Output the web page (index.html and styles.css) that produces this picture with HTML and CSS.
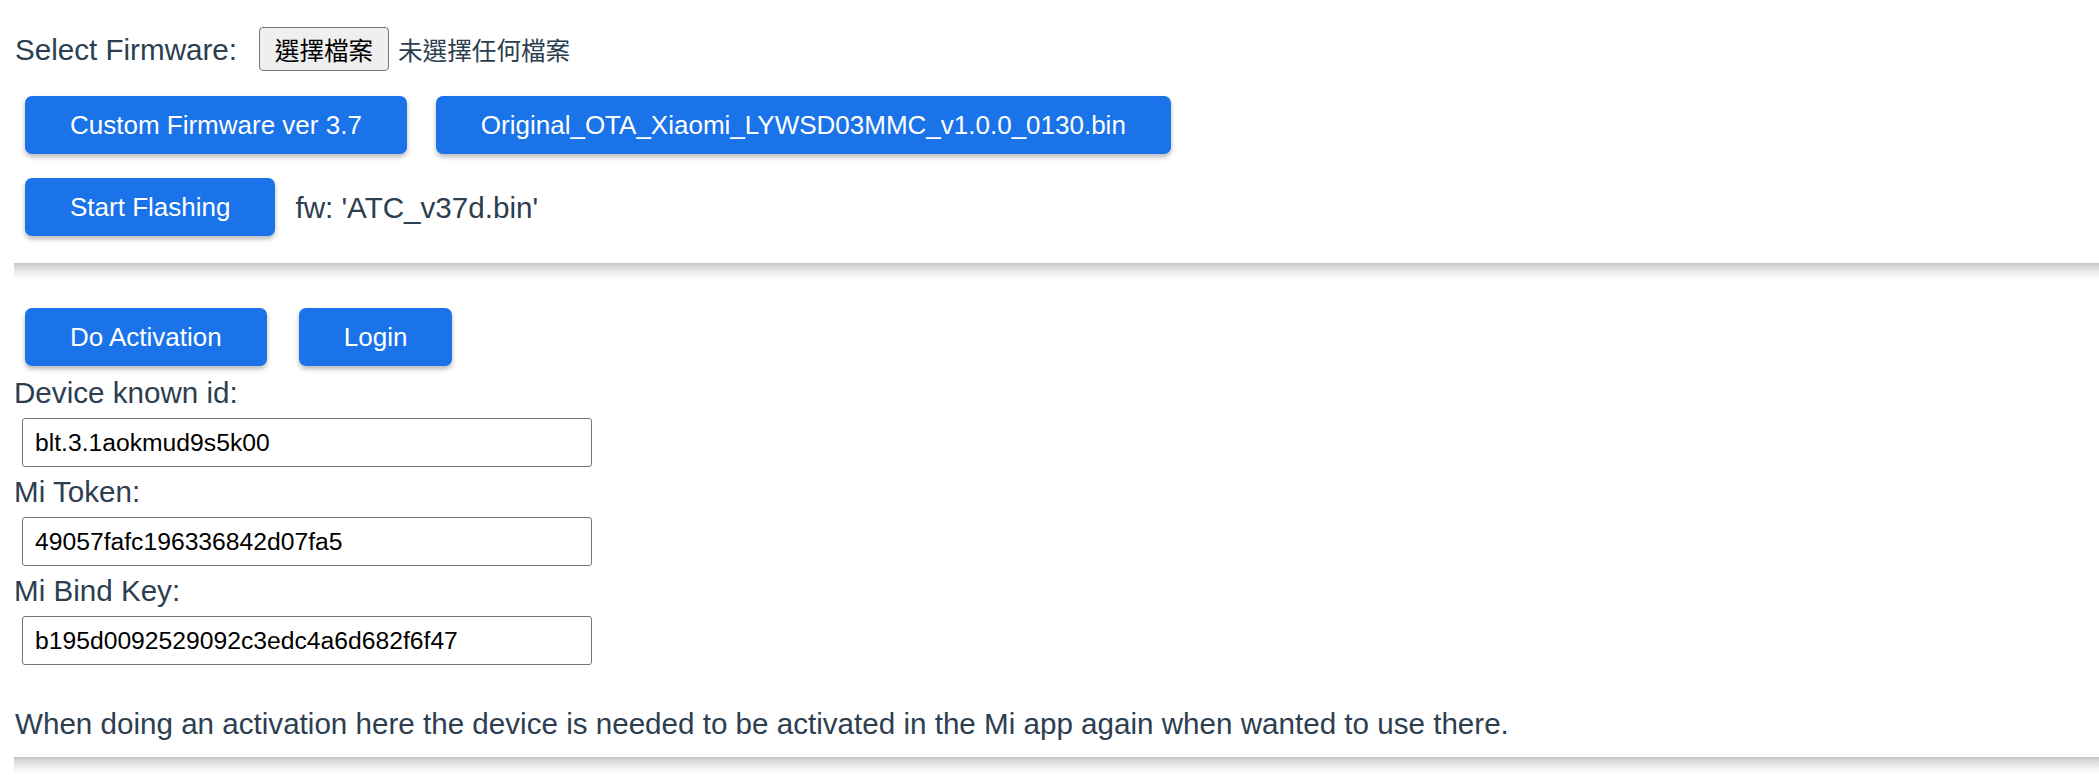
FILE: index.html
```html
<!DOCTYPE html>
<html lang="zh-Hant">
<head>
<meta charset="utf-8">
<title>Firmware</title>
<link rel="stylesheet" href="styles.css">
</head>
<body>
  <section class="panel">
    <div class="file-row">
      <span class="field-label">Select Firmware:</span>
      <span class="file-input">
        <button class="file-btn" type="button">選擇檔案</button>
        <span class="file-status">未選擇任何檔案</span>
      </span>
    </div>
    <div class="btn-row first">
      <button class="btn" type="button">Custom Firmware ver 3.7</button>
      <button class="btn" type="button">Original_OTA_Xiaomi_LYWSD03MMC_v1.0.0_0130.bin</button>
    </div>
    <div class="btn-row second">
      <button class="btn" type="button">Start Flashing</button>
      <span class="fw-name">fw: 'ATC_v37d.bin'</span>
    </div>
  </section>
  <div class="divider"></div>
  <section class="panel">
    <div class="btn-row third">
      <button class="btn" type="button">Do Activation</button>
      <button class="btn" type="button">Login</button>
    </div>
    <label class="field-label block first-label" for="known-id">Device known id:</label>
    <input class="text-input" id="known-id" type="text" value="blt.3.1aokmud9s5k00">
    <label class="field-label block" for="token">Mi Token:</label>
    <input class="text-input" id="token" type="text" value="49057fafc196336842d07fa5">
    <label class="field-label block" for="bindkey">Mi Bind Key:</label>
    <input class="text-input" id="bindkey" type="text" value="b195d0092529092c3edc4a6d682f6f47">
    <p class="note">When doing an activation here the device is needed to be activated in the Mi app again when wanted to use there.</p>
  </section>
  <div class="divider last"></div>
</body>
</html>
```
FILE: styles.css
```css
html, body {
  background: #ffffff;
}
body {
  margin: 0 0 0 14px;
  font-family: "Liberation Sans", Arial, sans-serif;
  font-size: 29.6px;
  line-height: 33px;
  color: #2c3e50;
  overflow: hidden;
}
.file-row {
  display: flex;
  align-items: center;
  margin-top: 27px;
  height: 44px;
  padding-left: 1px;
}
.field-label {
  white-space: nowrap;
}
.file-input {
  display: flex;
  align-items: center;
  margin-left: 22px;
}
.file-btn {
  box-sizing: border-box;
  width: 130px;
  height: 44px;
  padding: 0;
  background: #efefef;
  border: 1px solid #767676;
  border-radius: 4px;
  font-family: "Noto Sans CJK TC", "Liberation Sans", sans-serif;
  font-size: 24.6px;
  color: #000000;
}
.file-status {
  margin-left: 9px;
  font-family: "Noto Sans CJK TC", "Liberation Sans", sans-serif;
  font-size: 24.6px;
  color: #2c3e50;
}
.btn-row {
  display: flex;
  align-items: center;
  gap: 29px;
  padding-left: 11px;
}
.btn-row.first {
  margin-top: 25px;
}
.btn-row.second {
  margin-top: 24px;
  gap: 20px;
}
.btn-row.third {
  margin-top: 27px;
  gap: 32px;
}
.btn {
  height: 58px;
  padding: 0 45px;
  background: #1a73e8;
  color: #ffffff;
  border: none;
  border-radius: 7px;
  font-family: "Liberation Sans", Arial, sans-serif;
  font-size: 26px;
  box-shadow: 0 3px 5px rgba(0, 0, 0, 0.28);
  white-space: nowrap;
}
.fw-name {
  white-space: nowrap;
}
.divider {
  height: 18px;
  margin-top: 27px;
  background: linear-gradient(to bottom, #c4c4c4 0%, #dcdcdc 25%, #efefef 55%, #fbfbfb 85%, #ffffff 100%);
}
.divider.last {
  margin-top: 17px;
}
.block {
  display: block;
  margin-top: 8px;
}
.block.first-label {
  margin-top: 10px;
}
.text-input {
  display: block;
  box-sizing: border-box;
  width: 570px;
  height: 49px;
  margin: 9px 0 0 8px;
  padding: 0 12px;
  border: 1px solid #767676;
  border-radius: 3px;
  font-family: "Liberation Sans", Arial, sans-serif;
  font-size: 24.7px;
  color: #000000;
  background: #ffffff;
}
.note {
  margin: 42px 0 0 1px;
  white-space: nowrap;
}
```
